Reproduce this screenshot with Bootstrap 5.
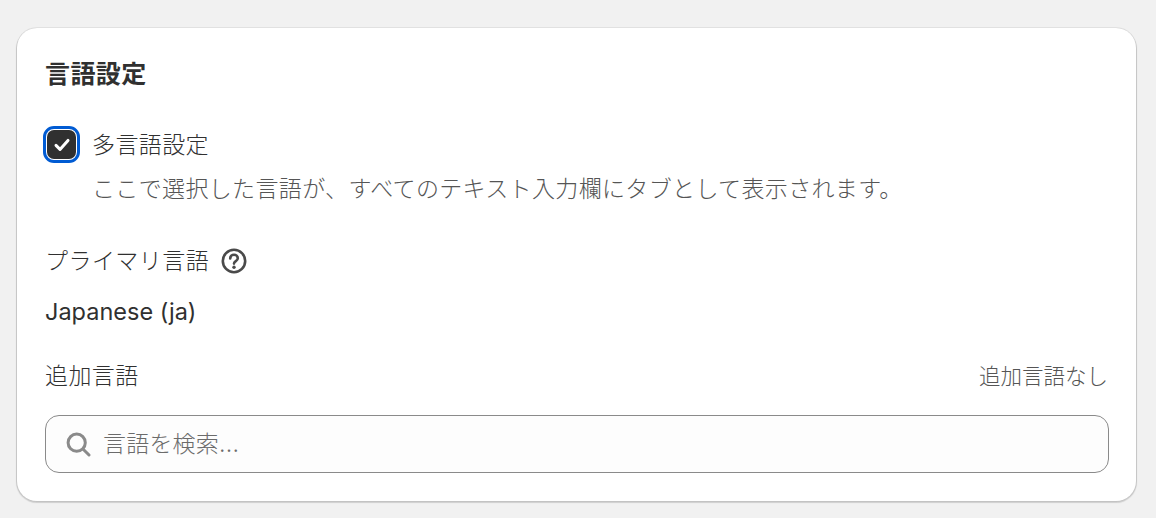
<!DOCTYPE html>
<html lang="ja">
<head>
<meta charset="utf-8">
<title>言語設定</title>
<link href="https://cdn.jsdelivr.net/npm/bootstrap@5.3.0/dist/css/bootstrap.min.css" rel="stylesheet">
<style>
html,body{height:100%}
body{background:#f1f1f1;color:#303030;font-family:Inter,"Noto Sans CJK JP",sans-serif;font-size:23px;line-height:32px;overflow:hidden;padding:28px 20px 17px 17px}
.panel{background:#fff;border-radius:20px;height:473px;padding:29px 27px 0 28px;box-shadow:0 1px 1px 1px rgba(0,0,0,.14),0 0 0 1px rgba(0,0,0,.05)}
.panel-title{font-size:25px;font-weight:700;line-height:34px;margin:0 0 36px;letter-spacing:.4px}
.jp-thin{font-weight:300;letter-spacing:.2px}
.tick-wrap{width:37px;height:37px;border:3px solid #005bd3;border-radius:11px;padding:1px;flex:none;margin:-1px 12px -1px -2px}
.tick-box{width:100%;height:100%;background:#303030;border-radius:7px}
.muted-text{color:#555}
.check-label{letter-spacing:.4px}
.desc{margin:11px 0 0 47px;line-height:32px;letter-spacing:.35px}
.primary-head{margin-top:40px;gap:12px}
.primary-label{letter-spacing:.45px}
.lang-value{margin-top:19px;line-height:32px;font-size:23.5px}
.extra-head{margin-top:32px}
.extra-label{letter-spacing:.4px}
.extra-note{font-size:21.5px;color:#555;letter-spacing:0;margin-right:1px}
.search-box{height:58px;border:1px solid #8a8a8a;border-radius:14px;background:#fdfdfd;margin-top:23px;padding:0 20px;gap:12px;color:#6b6b6b}
</style>
</head>
<body>
<main class="panel">
  <h2 class="panel-title">言語設定</h2>
  <div class="d-flex align-items-center">
    <div class="tick-wrap"><div class="tick-box d-flex align-items-center justify-content-center">
      <svg width="20" height="20" viewBox="0 0 20 20" fill="none"><path d="M4 10.4 8 14.4 16 5.4" stroke="#fff" stroke-width="3" stroke-linecap="round" stroke-linejoin="round"/></svg>
    </div></div>
    <span class="jp-thin check-label">多言語設定</span>
  </div>
  <p class="desc muted-text mb-0 jp-thin">ここで選択した言語が、すべてのテキスト入力欄にタブとして表示されます。</p>
  <div class="primary-head d-flex align-items-center">
    <span class="jp-thin primary-label">プライマリ言語</span>
    <svg width="26" height="26" viewBox="0 0 26 26" fill="none"><circle cx="13" cy="13" r="11.2" stroke="#4a4a4a" stroke-width="2.6"/><path d="M9.2 10.4c0-2.2 1.7-3.6 3.8-3.6s3.8 1.4 3.8 3.4c0 2.9-3.8 2.9-3.8 5.4" stroke="#4a4a4a" stroke-width="2.6" stroke-linecap="round"/><circle cx="13" cy="19.3" r="1.7" fill="#4a4a4a"/></svg>
  </div>
  <div class="lang-value">Japanese (ja)</div>
  <div class="extra-head d-flex justify-content-between align-items-center">
    <span class="jp-thin extra-label">追加言語</span>
    <span class="extra-note jp-thin">追加言語なし</span>
  </div>
  <div class="search-box d-flex align-items-center">
    <svg width="25" height="25" viewBox="0 0 25 25" fill="none"><circle cx="10.7" cy="10.7" r="8.6" stroke="#8a8a8a" stroke-width="3"/><path d="M17.2 17.2 23 23" stroke="#8a8a8a" stroke-width="3" stroke-linecap="round"/></svg>
    <span class="jp-thin">言語を検索...</span>
  </div>
</main>
<script src="https://cdn.jsdelivr.net/npm/bootstrap@5.3.0/dist/js/bootstrap.bundle.min.js"></script>
</body>
</html>
